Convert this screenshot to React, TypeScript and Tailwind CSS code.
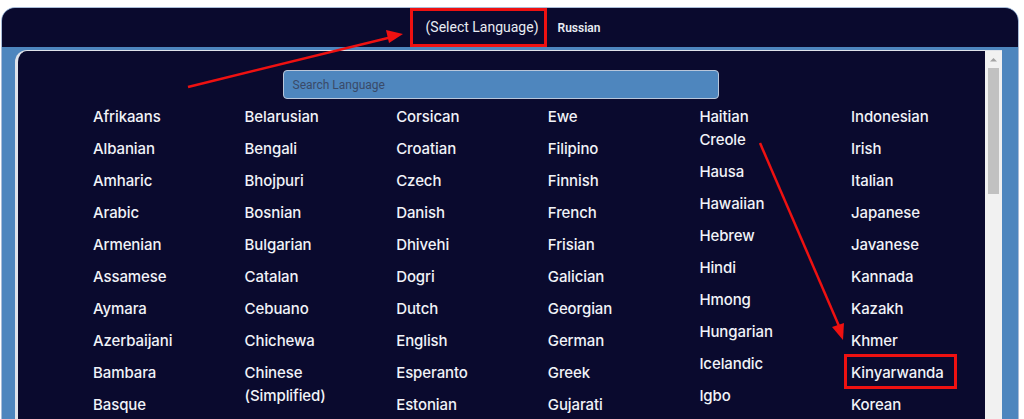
const columns: string[][] = [
  ['Afrikaans', 'Albanian', 'Amharic', 'Arabic', 'Armenian', 'Assamese', 'Aymara', 'Azerbaijani', 'Bambara', 'Basque', 'Belarusian'],
  ['Belarusian', 'Bengali', 'Bhojpuri', 'Bosnian', 'Bulgarian', 'Catalan', 'Cebuano', 'Chichewa', 'Chinese (Simplified)', 'Chinese (Traditional)'],
  ['Corsican', 'Croatian', 'Czech', 'Danish', 'Dhivehi', 'Dogri', 'Dutch', 'English', 'Esperanto', 'Estonian', 'Ewe'],
  ['Ewe', 'Filipino', 'Finnish', 'French', 'Frisian', 'Galician', 'Georgian', 'German', 'Greek', 'Gujarati', 'Guarani'],
  ['Haitian Creole', 'Hausa', 'Hawaiian', 'Hebrew', 'Hindi', 'Hmong', 'Hungarian', 'Icelandic', 'Igbo', 'Ilocano'],
  ['Indonesian', 'Irish', 'Italian', 'Japanese', 'Javanese', 'Kannada', 'Kazakh', 'Khmer', 'Kinyarwanda', 'Korean', 'Krio'],
];

export default function App() {
  return (
    <div className="relative w-[1024px] h-[419px] overflow-hidden bg-white pt-[7px] pl-px pr-[5px]">
      <div className="h-[420px] flex flex-col rounded-t-[14px] border border-[#a9bcd8] bg-[#4e86be] overflow-hidden">
        {/* top bar */}
        <div className="h-[39px] shrink-0 bg-[#0a0a2e] flex items-center justify-center gap-[19px] pl-[6px]">
          <span className="text-[14px] text-[#e9ecf3] font-['Roboto',sans-serif]">(Select Language)</span>
          <span className="text-[12px] font-semibold text-[#e9ecf3] font-['Roboto',sans-serif]">Russian</span>
        </div>

        {/* body */}
        <div className="flex-1 flex pl-[13px] pt-[3px] pr-[16px]">
          <div className="flex-1 min-w-0 flex rounded-tl-[12px] border-t border-l-[3px] border-[#dfe3ea] bg-[#0a0a2e] overflow-hidden">
            <div className="flex-1 min-w-0 flex flex-col overflow-hidden">
              <div className="flex justify-center pt-[19px] pr-[2px]">
                <div className="w-[436px] h-[29px] rounded-[4px] border border-[#b9c6da] bg-[#4e86be] flex items-center px-[9px] text-[12px] text-[#3a4a68] font-['Roboto',sans-serif]">
                  Search Language
                </div>
              </div>
              <div className="flex pl-[75px] pt-[6px]">
                {columns.map((col, i) => (
                  <div key={i} className="w-[151.6px] shrink-0 flex flex-col">
                    {col.map((lang) => (
                      <div
                        key={lang}
                        className="w-[98px] mb-[9px] text-[15px] leading-[23px] font-medium text-[#f1f3f8] font-['Inter',sans-serif] tracking-[-0.1px]"
                      >
                        {lang}
                      </div>
                    ))}
                  </div>
                ))}
              </div>
            </div>
            {/* scrollbar */}
            <div className="w-[17px] shrink-0 bg-[#f1f1f1] flex flex-col items-center">
              <svg width="17" height="17" viewBox="0 0 17 17" className="shrink-0">
                <path d="M5 10.5 L8.5 7 L12 10.5 Z" fill="#a3a3a3" />
              </svg>
              <div className="w-[11px] h-[126px] bg-[#c1c1c1]" />
            </div>
          </div>
        </div>
      </div>

      {/* annotations */}
      <div className="absolute left-[410px] top-[8px] w-[137px] h-[39px] border-[3px] border-[#ee1111]" />
      <div className="absolute left-[844px] top-[354px] w-[113px] h-[35px] border-[3px] border-[#ee1111]" />
      <svg className="absolute left-0 top-0" width="1024" height="419" viewBox="0 0 1024 419">
        <line x1="188" y1="87" x2="392" y2="37" stroke="#ee1111" strokeWidth="2.5" />
        <path d="M403 34 L386 30 L389 43 Z" fill="#ee1111" />
        <line x1="760" y1="143" x2="839" y2="326" stroke="#ee1111" strokeWidth="2.5" />
        <path d="M843 340 L832 327 L844 323 Z" fill="#ee1111" />
      </svg>
    </div>
  );
}
